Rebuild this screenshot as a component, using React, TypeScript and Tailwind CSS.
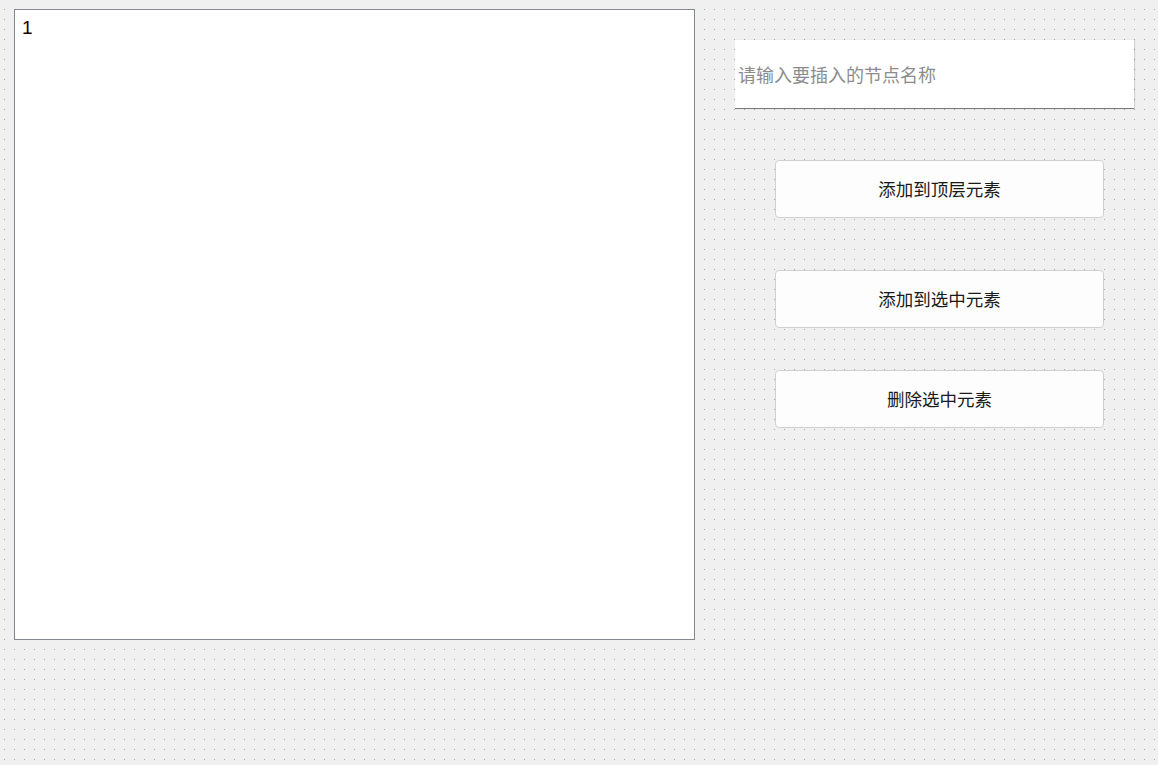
import { useState } from "react";

const font = "font-['Microsoft_YaHei','Noto_Sans_CJK_SC',sans-serif]";

const buttons = [
  { label: "添加到顶层元素", mt: "mt-[51px]" },
  { label: "添加到选中元素", mt: "mt-[52px]" },
  { label: "删除选中元素", mt: "mt-[42px]" },
];

export default function App() {
  const [name, setName] = useState("");

  return (
    <div
      className={`w-[1158px] h-[765px] overflow-hidden bg-[#f0f0f0] bg-[image:radial-gradient(circle_at_0.5px_0.5px,#a4a4a4_0.55px,transparent_0.75px)] bg-[size:10px_10px] bg-[position:4px_9px] flex items-start ${font}`}
    >
      {/* 树形视图 */}
      <div className="ml-[14px] mt-[9px] w-[681px] h-[631px] bg-white border border-[#828790] px-[7px] pt-[6px]">
        <div className="text-[19px] leading-[24px] text-[#1a0000] font-['Liberation_Sans',sans-serif]">1</div>
      </div>

      {/* 右侧操作区 */}
      <div className="ml-[40px] mt-[40px] flex flex-col">
        <input
          value={name}
          onChange={(e) => setName(e.target.value)}
          placeholder="请输入要插入的节点名称"
          className={`w-[399px] h-[69px] bg-white border-b border-[#7a7a7a] shadow-[1px_0_1px_rgba(0,0,0,0.12)] pl-[3px] text-[18px] text-[#333] placeholder:text-[#8c8c8c] outline-none ${font}`}
        />
        {buttons.map((b) => (
          <button
            key={b.label}
            className={`${b.mt} ml-[40px] w-[329px] h-[58px] bg-[#fdfdfd] border border-[#d0d0d0] rounded-[4px] text-[17.5px] text-[#1a1a1a] ${font}`}
          >
            {b.label}
          </button>
        ))}
      </div>
    </div>
  );
}
